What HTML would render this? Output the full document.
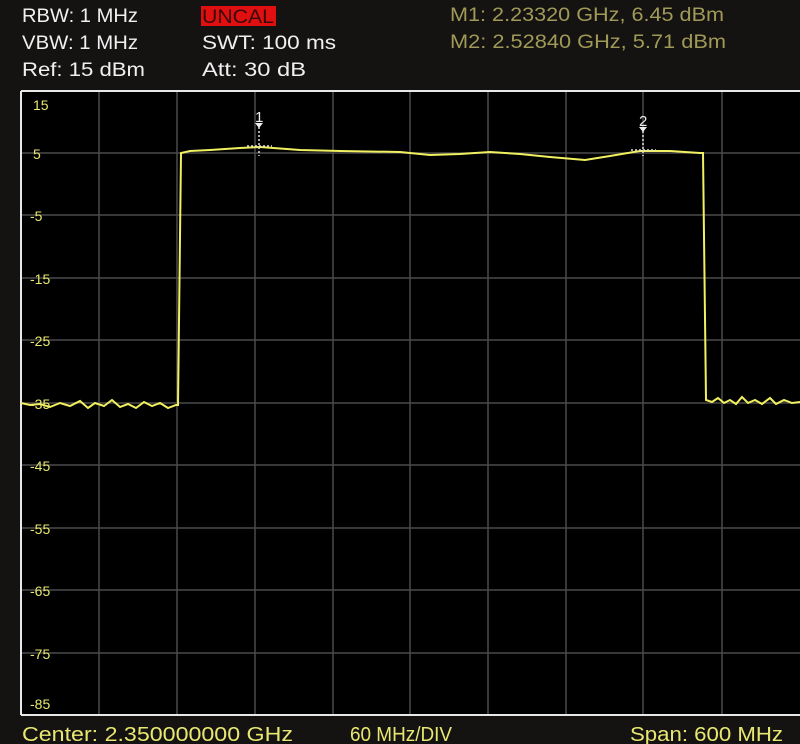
<!DOCTYPE html>
<html><head><style>
html,body{margin:0;padding:0;background:#151212;width:800px;height:744px;overflow:hidden}
svg{display:block}
text{font-family:"Liberation Sans",sans-serif}
</style></head><body>
<svg width="800" height="744" viewBox="0 0 800 744" xmlns="http://www.w3.org/2000/svg">
<rect width="800" height="744" fill="#151212"/>
<g font-size="19" fill="#f0f0f0">
<text x="22" y="22" textLength="116" lengthAdjust="spacingAndGlyphs">RBW: 1 MHz</text>
<text x="22" y="49" textLength="116" lengthAdjust="spacingAndGlyphs">VBW: 1 MHz</text>
<text x="22" y="76" textLength="123" lengthAdjust="spacingAndGlyphs">Ref: 15 dBm</text>
<rect x="201" y="6" width="75" height="20" fill="#e01010"/>
<text x="202" y="23" fill="#3a0808" textLength="72" lengthAdjust="spacingAndGlyphs">UNCAL</text>
<text x="202" y="49" textLength="134" lengthAdjust="spacingAndGlyphs">SWT: 100 ms</text>
<text x="202" y="76" textLength="104" lengthAdjust="spacingAndGlyphs">Att: 30 dB</text>
</g>
<g font-size="19" fill="#a09a58">
<text x="450" y="21" textLength="274" lengthAdjust="spacingAndGlyphs">M1: 2.23320 GHz, 6.45 dBm</text>
<text x="450" y="48" textLength="276" lengthAdjust="spacingAndGlyphs">M2: 2.52840 GHz, 5.71 dBm</text>
</g>
<rect x="21" y="91" width="790" height="624" fill="#000"/>
<g stroke="#4a4a4a" stroke-width="1.5">
<line x1="99" y1="91" x2="99" y2="715"/><line x1="177" y1="91" x2="177" y2="715"/>
<line x1="255" y1="91" x2="255" y2="715"/><line x1="333" y1="91" x2="333" y2="715"/>
<line x1="410" y1="91" x2="410" y2="715"/><line x1="488" y1="91" x2="488" y2="715"/>
<line x1="566" y1="91" x2="566" y2="715"/><line x1="643" y1="91" x2="643" y2="715"/>
<line x1="722" y1="91" x2="722" y2="715"/>
<line x1="21" y1="153" x2="800" y2="153"/><line x1="21" y1="215" x2="800" y2="215"/>
<line x1="21" y1="278" x2="800" y2="278"/><line x1="21" y1="340" x2="800" y2="340"/>
<line x1="21" y1="403" x2="800" y2="403"/><line x1="21" y1="465" x2="800" y2="465"/>
<line x1="21" y1="528" x2="800" y2="528"/><line x1="21" y1="590" x2="800" y2="590"/>
<line x1="21" y1="653" x2="800" y2="653"/>
</g>
<line x1="21" y1="91" x2="800" y2="91" stroke="#e8e8e8" stroke-width="2"/>
<line x1="21" y1="91" x2="21" y2="715" stroke="#e8e8e8" stroke-width="2"/>
<line x1="21" y1="715" x2="800" y2="715" stroke="#e8e8e8" stroke-width="2"/>
<g font-size="14" fill="#e8e870">
<text x="33" y="110">15</text><text x="33" y="159">5</text>
<text x="30" y="221">-5</text><text x="30" y="284">-15</text>
<text x="30" y="346">-25</text><text x="30" y="409">-35</text>
<text x="30" y="471">-45</text><text x="30" y="534">-55</text>
<text x="30" y="596">-65</text><text x="30" y="659">-75</text>
<text x="30" y="709">-85</text>
</g>
<polyline fill="none" stroke="#f0f060" stroke-width="2" points="21,403 30,405 40,404 50,407 60,403 70,406 80,401 88,408 95,403 104,406 112,400 120,407 128,404 136,408 144,402 152,406 160,403 168,408 176,405 178,405 181,153 190,151 210,150 240,148 260,147 300,150 340,151 400,152 430,155 460,154 490,152 520,154 550,157 585,160 610,156 640,151 670,151 700,153 703,153 706,400 712,402 718,398 724,403 730,400 736,404 742,397 748,403 755,400 762,404 770,398 776,404 784,400 792,403 800,402"/>
<g stroke="#ddd" stroke-width="1.5" stroke-dasharray="2,2" fill="none">
<line x1="259" y1="127" x2="259" y2="156"/><line x1="247" y1="146" x2="272" y2="146"/>
<line x1="643" y1="127" x2="643" y2="156"/><line x1="631" y1="150" x2="656" y2="150"/>
</g>
<g fill="#eee" font-size="15"><text x="255" y="122">1</text><text x="639" y="126">2</text></g>
<polygon points="255,123 263,123 259,128" fill="#eee"/>
<polygon points="639,127 647,127 643,132" fill="#eee"/>
<g font-size="20" fill="#e8e870">
<text x="22" y="741" textLength="271" lengthAdjust="spacingAndGlyphs">Center: 2.350000000 GHz</text>
<text x="350" y="741" textLength="102" lengthAdjust="spacingAndGlyphs">60 MHz/DIV</text>
<text x="630" y="741" textLength="153" lengthAdjust="spacingAndGlyphs">Span: 600 MHz</text>
</g>
</svg>
</body></html>
